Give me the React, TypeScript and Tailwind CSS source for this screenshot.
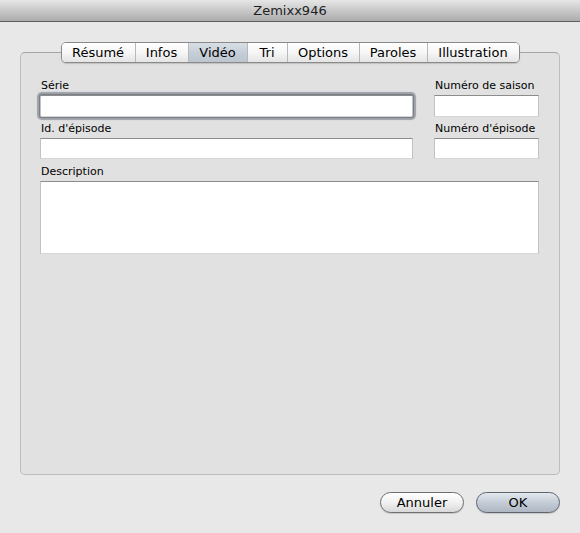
import React from "react";

const font = { fontFamily: '"DejaVu Sans", "Liberation Sans", sans-serif' };

const tabs: { label: string; w: number }[] = [
  { label: "Résumé", w: 74 },
  { label: "Infos", w: 53 },
  { label: "Vidéo", w: 59 },
  { label: "Tri", w: 40 },
  { label: "Options", w: 72 },
  { label: "Paroles", w: 68 },
  { label: "Illustration", w: 92 },
];

function Field({ h, focused, className = "" }: { h: string; focused?: boolean; className?: string }) {
  return (
    <div
      className={`${h} bg-white border border-[#c2c2c2] border-t-[#8c8c8c] border-b-[#d6d6d6] ${
        focused ? "rounded-[2px] shadow-[0_0_0_1px_#7b8088,0_0_1px_3px_#9ca1a8]" : ""
      } ${className}`}
    />
  );
}

export default function App() {
  return (
    <div className="w-[580px] h-[533px] bg-[#e8e8e8] flex flex-col text-black" style={font}>
      <div className="h-[22px] shrink-0 bg-gradient-to-b from-[#e6e6e6] to-[#acacac] border-b border-[#5e5e5e] flex items-center justify-center text-[13px] text-[#1e1e1e]">
        Zemixx946
      </div>
      <div className="px-[20px] pt-[20px] flex flex-col">
        <div className="relative z-10 flex justify-center h-[21px]">
          <div className="flex rounded-[5px] border border-[#8a8a8a] overflow-hidden shadow-[0_1px_1px_rgba(0,0,0,0.15)]">
            {tabs.map((t, i) => (
              <div
                key={t.label}
                style={{ width: t.w - (i === 0 ? 1 : 0) }}
                className={`flex items-center justify-center text-[13px] leading-none ${
                  i > 0 ? "border-l border-[#b8b8b8]" : ""
                } ${
                  t.label === "Vidéo"
                    ? "bg-gradient-to-b from-[#d9dfe6] via-[#c6ced8] to-[#bcc5d0]"
                    : "bg-gradient-to-b from-[#ffffff] via-[#f6f6f6] to-[#e4e4e4]"
                }`}
              >
                {t.label}
              </div>
            ))}
          </div>
        </div>
        <div className="-mt-[11px] h-[423px] rounded-[5px] border border-[#bcbcbc] border-t-[#a4a4a4] bg-[#e1e1e1] pt-[26px] pl-[19px]">
          <div className="grid grid-cols-[373px_105px] gap-x-[21px] text-[11px] leading-[13px]">
            <div className="flex flex-col">
              <div className="pl-[1px]">Série</div>
              <Field h="h-[22px]" focused className="mt-[3px]" />
            </div>
            <div className="flex flex-col">
              <div className="pl-[1px]">Numéro de saison</div>
              <Field h="h-[22px]" className="mt-[3px]" />
            </div>
            <div className="flex flex-col mt-[5px]">
              <div className="pl-[1px]">Id. d'épisode</div>
              <Field h="h-[21px]" className="mt-[3px]" />
            </div>
            <div className="flex flex-col mt-[5px]">
              <div className="pl-[1px]">Numéro d'épisode</div>
              <Field h="h-[21px]" className="mt-[3px]" />
            </div>
            <div className="col-span-2 flex flex-col mt-[6px]">
              <div className="pl-[1px]">Description</div>
              <Field h="h-[73px]" className="mt-[3px] w-[499px]" />
            </div>
          </div>
        </div>
        <div className="mt-[17px] flex justify-end gap-[12px]">
          <button className="w-[84px] h-[21px] rounded-full border border-[#6f6f6f] bg-gradient-to-b from-[#ffffff] via-[#f1f1f1] to-[#d9d9d9] text-[13px] leading-none flex items-center justify-center shadow-[0_1px_1px_rgba(0,0,0,0.15)]">
            Annuler
          </button>
          <button className="w-[84px] h-[21px] rounded-full border border-[#5f656e] bg-gradient-to-b from-[#e3e8ee] via-[#c4ccd6] to-[#aeb7c3] text-[13px] leading-none flex items-center justify-center shadow-[0_1px_1px_rgba(0,0,0,0.15)]">
            OK
          </button>
        </div>
      </div>
    </div>
  );
}
